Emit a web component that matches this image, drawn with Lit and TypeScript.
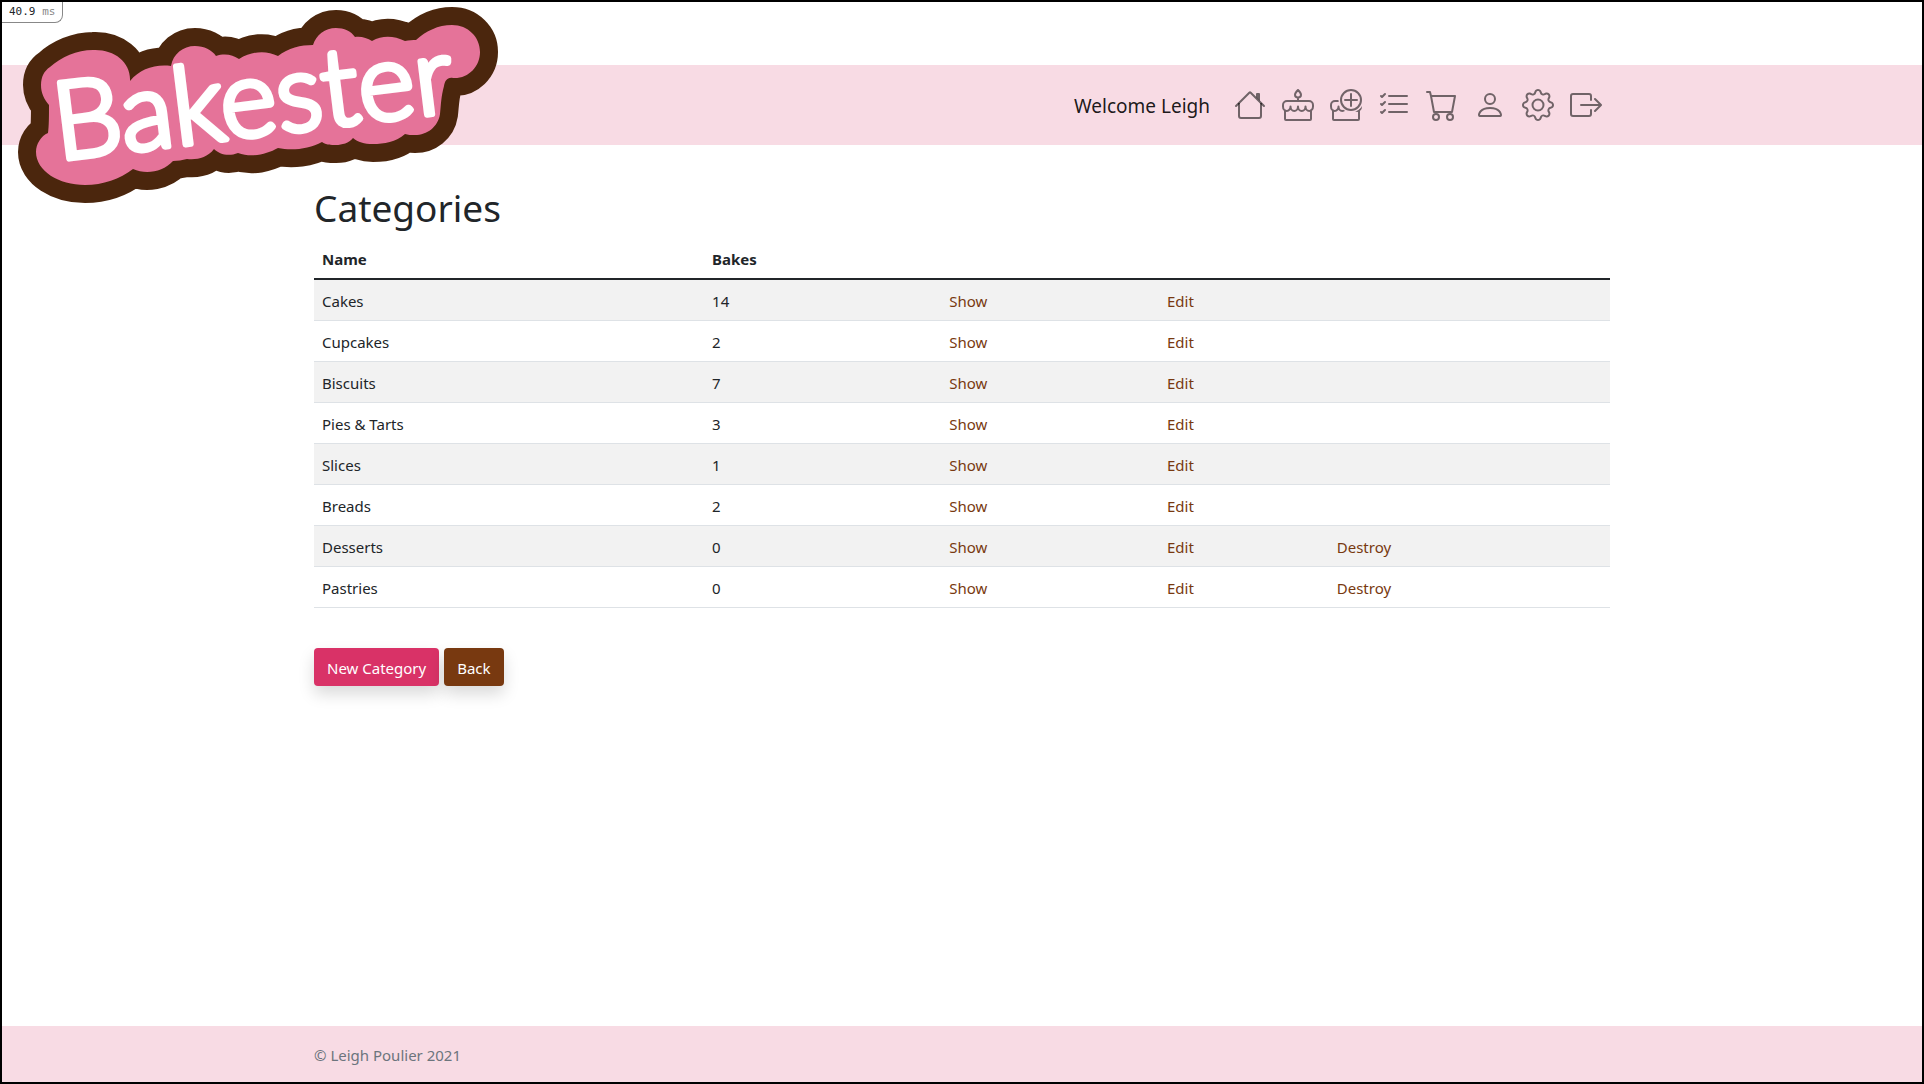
import { LitElement, html, css, svg } from "lit";
import { customElement } from "lit/decorators.js";

interface Category {
  name: string;
  bakes: number;
}

interface NavItem {
  label: string;
  art: unknown;
}

const CATEGORIES: Category[] = [
  { name: "Cakes", bakes: 14 },
  { name: "Cupcakes", bakes: 2 },
  { name: "Biscuits", bakes: 7 },
  { name: "Pies & Tarts", bakes: 3 },
  { name: "Slices", bakes: 1 },
  { name: "Breads", bakes: 2 },
  { name: "Desserts", bakes: 0 },
  { name: "Pastries", bakes: 0 },
];

const glyph = (...paths: string[]) => html`<svg class="icon" viewBox="0 0 16 16" aria-hidden="true">
  ${paths.map((d) => svg`<path fill-rule="evenodd" d=${d}></path>`)}
</svg>`;

const cakeBody = svg`
  <path d="M3 21.500V30a1 1 0 0 0 1 1h24a1 1 0 0 0 1-1v-8.500"></path>
  <path d="M5 12h22a4 4 0 0 1 4 4v1.500a3.750 4.500 0 0 1-7.500 0a3.750 4.500 0 0 1-7.500 0a3.750 4.500 0 0 1-7.500 0a3.750 4.500 0 0 1-7.500 0V16a4 4 0 0 1 4-4z"></path>`;

const NAV: NavItem[] = [
  {
    label: "Home",
    art: glyph(
      "M2 13.5V7h1v6.5a.5.5 0 0 0 .5.5h9a.5.5 0 0 0 .5-.5V7h1v6.5a1.5 1.5 0 0 1-1.5 1.5h-9A1.5 1.5 0 0 1 2 13.5zm11-11V6l-2-2V2.5a.5.5 0 0 1 .5-.5h1a.5.5 0 0 1 .5.5z",
      "M7.293 1.5a1 1 0 0 1 1.414 0l6.647 6.646a.5.5 0 0 1-.708.708L8 2.207 1.354 8.854a.5.5 0 1 1-.708-.708L7.293 1.5z"
    ),
  },
  {
    label: "Bakes",
    art: html`<svg class="icon line" viewBox="0 0 32 32" aria-hidden="true">
      ${cakeBody}
      <path d="M16 1C14.500 2.500 13 4.200 13 5.800a3 2.800 0 0 0 6 0C19 4.200 17.500 2.500 16 1zM16 8.600V12"></path>
    </svg>`,
  },
  {
    label: "New bake",
    art: html`<svg class="icon line" viewBox="0 0 32 32" aria-hidden="true">
      <mask id="cut" maskUnits="userSpaceOnUse" x="0" y="0" width="32" height="32">
        <rect width="32" height="32" fill="#fff" stroke="none"></rect>
        <circle cx="21" cy="11" r="12.500" fill="#000" stroke="none"></circle>
      </mask>
      <g mask="url(#cut)">${cakeBody}</g>
      <circle cx="21" cy="11" r="10"></circle>
      <path d="M21 5v12M15 11h12"></path>
    </svg>`,
  },
  {
    label: "Orders",
    art: glyph(
      "M5 11.5a.5.5 0 0 1 .5-.5h9a.5.5 0 0 1 0 1h-9a.5.5 0 0 1-.5-.5zm0-4a.5.5 0 0 1 .5-.5h9a.5.5 0 0 1 0 1h-9a.5.5 0 0 1-.5-.5zm0-4a.5.5 0 0 1 .5-.5h9a.5.5 0 0 1 0 1h-9a.5.5 0 0 1-.5-.5zM3.854 2.146a.5.5 0 0 1 0 .708l-1.5 1.5a.5.5 0 0 1-.708 0l-.5-.5a.5.5 0 1 1 .708-.708L2 3.293l1.146-1.147a.5.5 0 0 1 .708 0zm0 4a.5.5 0 0 1 0 .708l-1.500 1.500a.5.5 0 0 1-.708 0l-.5-.5a.5.5 0 1 1 .708-.708L2 7.293l1.146-1.147a.5.5 0 0 1 .708 0zm0 4a.5.5 0 0 1 0 .708l-1.500 1.500a.5.5 0 0 1-.708 0l-.5-.5a.5.5 0 0 1 .708-.708l.146.147 1.146-1.147a.5.5 0 0 1 .708 0z"
    ),
  },
  {
    label: "Basket",
    art: glyph(
      "M0 1.5A.5.5 0 0 1 .5 1H2a.5.5 0 0 1 .485.379L2.89 3H14.5a.5.5 0 0 1 .491.592l-1.5 8A.5.5 0 0 1 13 12H4a.5.5 0 0 1-.491-.408L2.01 3.607 1.61 2H.5a.5.5 0 0 1-.5-.5zM3.102 4l1.313 7h8.17l1.313-7H3.102zM5 12a2 2 0 1 0 0 4 2 2 0 0 0 0-4zm7 0a2 2 0 1 0 0 4 2 2 0 0 0 0-4zm-7 1a1 1 0 1 1 0 2 1 1 0 0 1 0-2zm7 0a1 1 0 1 1 0 2 1 1 0 0 1 0-2z"
    ),
  },
  {
    label: "Profile",
    art: glyph(
      "M8 8a3 3 0 1 0 0-6 3 3 0 0 0 0 6zm2-3a2 2 0 1 1-4 0 2 2 0 0 1 4 0zm4 8c0 1-1 1-1 1H3s-1 0-1-1 1-4 6-4 6 3 6 4zm-1-.004c-.001-.246-.154-.986-.832-1.664C11.516 10.68 10.289 10 8 10c-2.29 0-3.516.68-4.168 1.332-.678.678-.83 1.418-.832 1.664h10z"
    ),
  },
  {
    label: "Settings",
    art: glyph(
      "M8 4.754a3.246 3.246 0 1 0 0 6.492 3.246 3.246 0 0 0 0-6.492zM5.754 8a2.246 2.246 0 1 1 4.492 0 2.246 2.246 0 0 1-4.492 0z",
      "M9.796 1.343c-.527-1.79-3.065-1.79-3.592 0l-.094.319a.873.873 0 0 1-1.255.52l-.292-.16c-1.64-.892-3.433.902-2.54 2.541l.159.292a.873.873 0 0 1-.52 1.255l-.319.094c-1.79.527-1.79 3.065 0 3.592l.319.094a.873.873 0 0 1 .52 1.255l-.16.292c-.892 1.64.901 3.434 2.541 2.54l.292-.159a.873.873 0 0 1 1.255.52l.094.319c.527 1.79 3.065 1.79 3.592 0l.094-.319a.873.873 0 0 1 1.255-.52l.292.16c1.64.893 3.434-.902 2.54-2.541l-.159-.292a.873.873 0 0 1 .52-1.255l.319-.094c1.79-.527 1.79-3.065 0-3.592l-.319-.094a.873.873 0 0 1-.52-1.255l.16-.292c.893-1.64-.902-3.433-2.541-2.54l-.292.159a.873.873 0 0 1-1.255-.52l-.094-.319zm-2.633.283c.246-.835 1.428-.835 1.674 0l.094.319a1.873 1.873 0 0 0 2.693 1.115l.291-.16c.764-.415 1.6.42 1.184 1.185l-.159.292a1.873 1.873 0 0 0 1.116 2.692l.318.094c.835.246.835 1.428 0 1.674l-.319.094a1.873 1.873 0 0 0-1.115 2.693l.16.291c.415.764-.42 1.6-1.185 1.184l-.291-.159a1.873 1.873 0 0 0-2.693 1.116l-.094.318c-.246.835-1.428.835-1.674 0l-.094-.319a1.873 1.873 0 0 0-2.692-1.115l-.292.16c-.764.415-1.6-.42-1.184-1.185l.159-.291A1.873 1.873 0 0 0 1.945 8.93l-.319-.094c-.835-.246-.835-1.428 0-1.674l.319-.094A1.873 1.873 0 0 0 3.06 4.377l-.16-.292c-.415-.764.42-1.6 1.185-1.184l.292.159a1.873 1.873 0 0 0 2.692-1.115l.094-.319z"
    ),
  },
  {
    label: "Log out",
    art: glyph(
      "M10 12.5a.5.5 0 0 1-.5.5h-8a.5.5 0 0 1-.5-.5v-9a.5.5 0 0 1 .5-.5h8a.5.5 0 0 1 .5.5v2a.5.5 0 0 0 1 0v-2A1.5 1.5 0 0 0 9.5 2h-8A1.5 1.5 0 0 0 0 3.5v9A1.5 1.5 0 0 0 1.5 14h8a1.5 1.5 0 0 0 1.5-1.5v-2a.5.5 0 0 0-1 0v2z",
      "M15.854 8.354a.5.5 0 0 0 0-.708l-3-3a.5.5 0 0 0-.708.708L14.293 7.5H5.5a.5.5 0 0 0 0 1h8.793l-2.147 2.146a.5.5 0 0 0 .708.708l3-3z"
    ),
  },
];

@customElement("bakester-logo")
export class BakesterLogo extends LitElement {
  static styles = css`
    :host {
      display: block;
    }
    .logo {
      display: block;
      width: 100%;
      height: auto;
    }
    .icing {
      fill: #e57399;
      stroke: #4b260d;
      stroke-width: 36;
      stroke-linejoin: round;
      paint-order: stroke;
    }
    .word {
      font-family: Lato, "Liberation Sans", sans-serif;
      font-size: 108px;
      font-weight: 300;
      fill: #fff;
      stroke: #fff;
      stroke-width: 6;
      stroke-linejoin: round;
    }
  `;

  render() {
    return html`<svg class="logo" viewBox="18 6 481 198" role="img" aria-label="Bakester">
      <path
        class="icing"
        d="M41 85C41 77 44 71 50 67C61 57 77 50 93 50C114 49 131 62 130 81
           C140 69 155 64 171 66C173 54 183 46 195 46C204 46 212 50 216 56
           C225 53 233 55 239 59C252 51 266 50 278 56C288 48 301 45 313 45
           C316 35 325 28 336 28C344 28 351 31 355 37C361 36 367 38 372 41
           C383 35 394 36 405 41C409 40 413 40 416 40C426 31 438 25 452 25
           C468 25 480 37 480 52C480 67 468 79 453 78C447 77 445 81 444 86
           C441 97 441 105 440 114C438 127 427 135 415 135C411 135 408 135 405 134
           C396 142 384 144 373 144C364 144 358 142 353 138C349 143 342 145 336 145
           C331 145 326 145 322 142C309 149 292 151 278 148C267 154 252 158 238 153
           C228 157 219 154 214 149C207 158 197 160 187 159C182 160 178 161 173 161
           C163 172 146 175 133 169C120 179 103 185 85 185C59 185 36 171 36 152
           C36 144 41 136 48 133C49 126 49 116 49 105C44 99 41 93 41 85Z"
      ></path>
      <text class="word" x="58" y="160" transform="rotate(-7 58 160)">Bakester</text>
    </svg>`;
  }
}

@customElement("app-root")
export class AppRoot extends LitElement {
  static styles = css`
    :host {
      display: block;
      font-family: "Noto Sans", "Open Sans", sans-serif;
      font-size: 15px;
      line-height: 24px;
      color: #212529;
    }
    * {
      box-sizing: border-box;
    }
    a {
      color: #783910;
      text-decoration: none;
    }
    .page {
      position: relative;
      display: flex;
      flex-direction: column;
      min-height: 100vh;
      border: 2px solid #000;
      background: #fff;
    }
    .timing {
      position: absolute;
      top: 0;
      left: 0;
      padding: 2px 7px 2px 7px;
      border: 1px solid #888;
      border-width: 0 1px 1px 0;
      border-bottom-right-radius: 8px;
      background: #fff;
      font: 11px/16px "DejaVu Sans Mono", monospace;
    }
    .unit {
      color: #888;
    }
    .brand {
      position: absolute;
      top: 4px;
      left: 16px;
      width: 481px;
    }
    .bar {
      margin-top: 63px;
      background: #f8dbe4;
    }
    .container {
      width: 100%;
      max-width: 1320px;
      margin: 0 auto;
      padding: 0 12px;
    }
    .nav {
      display: flex;
      align-items: center;
      justify-content: flex-end;
      min-height: 80px;
      gap: 16px;
      padding-right: 20px;
    }
    .welcome {
      margin-right: 8px;
      padding-top: 2px;
      font-size: 19px;
      color: rgba(0, 0, 0, 0.9);
    }
    .nav-link {
      display: flex;
      color: rgba(0, 0, 0, 0.55);
    }
    .icon {
      width: 32px;
      height: 32px;
      fill: currentColor;
    }
    .line {
      fill: none;
      stroke: #726469;
      stroke-width: 2;
      stroke-linecap: round;
      stroke-linejoin: round;
    }
    .main {
      flex: 1;
      padding-top: 37px;
      padding-bottom: 40px;
    }
    .title {
      margin: 0 0 4px;
      font-size: 37px;
      line-height: 52px;
      font-weight: 400;
    }
    .table {
      width: 100%;
      border-collapse: collapse;
      table-layout: fixed;
    }
    .name {
      width: 30.1%;
    }
    .bakes {
      width: 18.3%;
    }
    .show {
      width: 16.8%;
    }
    .edit {
      width: 13.1%;
    }
    .cell {
      padding: 9px 8px 7px;
      border-bottom: 1px solid #dee2e6;
      text-align: left;
      font-weight: 400;
    }
    .head {
      border-bottom: 2px solid #212529;
      font-weight: 700;
    }
    .row:nth-child(odd) {
      background: #f2f2f2;
    }
    .actions {
      display: flex;
      gap: 5px;
      margin-top: 40px;
    }
    .button {
      padding: 8px 13px 6px;
      border-radius: 4px;
      background: #783910;
      color: #fff;
      box-shadow: 0 8px 16px rgba(0, 0, 0, 0.15);
    }
    .primary {
      background: #d93267;
    }
    .footer {
      padding: 17px 0 15px;
      background: #f8dbe4;
      color: #6c757d;
    }
  `;

  render() {
    return html`
      <div class="page">
        <header class="bar">
          <nav class="container nav">
            <span class="welcome">Welcome Leigh</span>
            ${NAV.map((item) => html`<a class="nav-link" href="#" aria-label=${item.label}>${item.art}</a>`)}
          </nav>
        </header>
        <a class="brand" href="#" aria-label="Bakester"><bakester-logo></bakester-logo></a>
        <div class="timing">40.9 <span class="unit">ms</span></div>
        <main class="container main">
          <h1 class="title">Categories</h1>
          <table class="table">
            <colgroup>
              <col class="name" />
              <col class="bakes" />
              <col class="show" />
              <col class="edit" />
              <col />
            </colgroup>
            <thead>
              <tr>
                <th class="cell head" scope="col">Name</th>
                <th class="cell head" scope="col">Bakes</th>
                <td class="cell head" colspan="3"></td>
              </tr>
            </thead>
            <tbody>
              ${CATEGORIES.map(
                (c) => html`<tr class="row">
                  <td class="cell">${c.name}</td>
                  <td class="cell">${c.bakes}</td>
                  <td class="cell"><a href="#">Show</a></td>
                  <td class="cell"><a href="#">Edit</a></td>
                  <td class="cell">${c.bakes === 0 ? html`<a href="#">Destroy</a>` : ""}</td>
                </tr>`
              )}
            </tbody>
          </table>
          <div class="actions">
            <a class="button primary" href="#">New Category</a>
            <a class="button" href="#">Back</a>
          </div>
        </main>
        <footer class="footer">
          <div class="container">© Leigh Poulier 2021</div>
        </footer>
      </div>
    `;
  }
}
